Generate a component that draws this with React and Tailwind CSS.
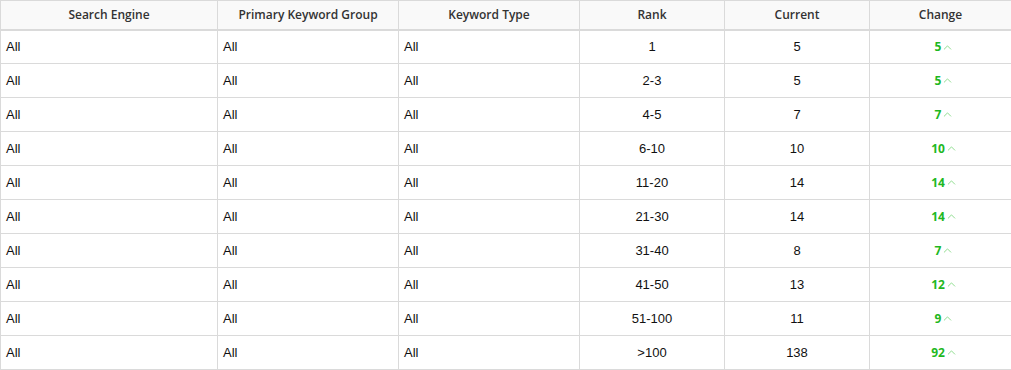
import { ChevronUp } from 'lucide-react';

// Keyword rank distribution table.
const rows = [
  { rank: '1', current: 5, change: 5 },
  { rank: '2-3', current: 5, change: 5 },
  { rank: '4-5', current: 7, change: 7 },
  { rank: '6-10', current: 10, change: 10 },
  { rank: '11-20', current: 14, change: 14 },
  { rank: '21-30', current: 14, change: 14 },
  { rank: '31-40', current: 8, change: 7 },
  { rank: '41-50', current: 13, change: 12 },
  { rank: '51-100', current: 11, change: 9 },
  { rank: '>100', current: 138, change: 92 },
];

const headers = ['Search Engine', 'Primary Keyword Group', 'Keyword Type', 'Rank', 'Current', 'Change'];

export default function App() {
  return (
    <div className="w-[1011px] h-[370px] bg-white">
      <table className="w-[1011px] table-fixed border-collapse">
        <colgroup>
          <col className="w-[217px]" />
          <col className="w-[181px]" />
          <col className="w-[181px]" />
          <col className="w-[145px]" />
          <col className="w-[145px]" />
          <col className="w-[142px]" />
        </colgroup>
        <thead>
          <tr className="h-[29px] bg-[#f9f9f9]">
            {headers.map((h) => (
              <th
                key={h}
                className="border border-[#dadada] border-b-2 text-center font-semibold text-[12px] text-[#333] p-0 font-['Open_Sans',sans-serif]"
              >
                {h}
              </th>
            ))}
          </tr>
        </thead>
        <tbody className="font-['Liberation_Sans',Arial,sans-serif] text-[13px] text-[#111]">
          {rows.map((r) => (
            <tr key={r.rank} className="h-[34px]">
              <td className="border border-[#dadada] px-[5px]">All</td>
              <td className="border border-[#dadada] px-[5px]">All</td>
              <td className="border border-[#dadada] px-[5px]">All</td>
              <td className="border border-[#dadada] text-center">{r.rank}</td>
              <td className="border border-[#dadada] text-center">{r.current}</td>
              <td className="border border-[#dadada] text-center">
                <span className="inline-flex items-center pl-[8px] font-['Open_Sans',sans-serif] font-bold text-[12px] text-[#1fb81f]">
                  {r.change}
                  <ChevronUp className="w-[13px] h-[13px] text-[#7ed87e]" strokeWidth={1.6} />
                </span>
              </td>
            </tr>
          ))}
        </tbody>
      </table>
    </div>
  );
}
